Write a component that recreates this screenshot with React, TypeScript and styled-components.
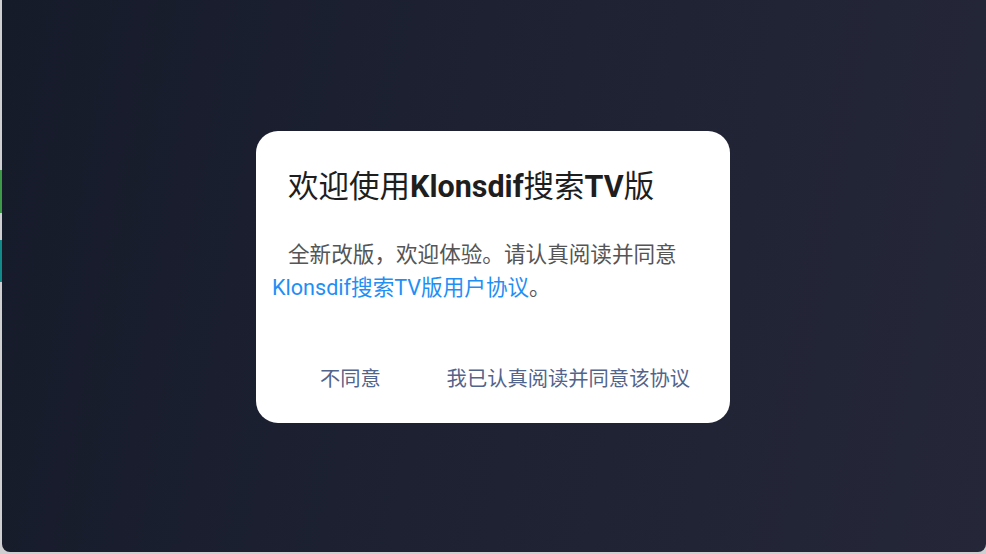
import React from "react";
import styled, { createGlobalStyle } from "styled-components";

const GlobalStyle = createGlobalStyle`
    html, body {
        margin: 0;
        padding: 0;
        width: 986px;
        height: 554px;
        overflow: hidden;
        background: #cfcfd2;
    }
    body {
        font-family: Roboto, "Noto Sans CJK SC", sans-serif;
    }
`;

const Frame = styled.div`
    display: flex;
    width: 986px;
    height: 554px;
`;

const EdgeStrip = styled.div`
    width: 2px;
    display: flex;
    flex-direction: column;
    padding-top: 170px;
`;

const EdgeMark = styled.div<{ $color: string; $height: number; $gap: number }>`
    height: ${(p) => p.$height}px;
    margin-bottom: ${(p) => p.$gap}px;
    background: ${(p) => p.$color};
`;

const Screen = styled.div`
    flex: 1;
    height: 552px;
    border-radius: 0 0 8px 8px;
    background: linear-gradient(100deg, #161b2a 0%, #1d2132 45%, #252738 100%);
    display: flex;
    align-items: flex-start;
    justify-content: center;
    padding-top: 131px;
    box-sizing: border-box;
`;

const Dialog = styled.div`
    width: 474px;
    height: 292px;
    margin-left: -2px;
    background: #ffffff;
    border-radius: 22px;
    display: flex;
    flex-direction: column;
    box-sizing: border-box;
`;

const Title = styled.h1`
    margin: 0;
    padding: 36px 0 0 32px;
    font-size: 30.5px;
    line-height: 40px;
    font-weight: 400;
    color: #1e1e1e;
    white-space: nowrap;
    b {
        font-weight: 700;
    }
`;

const Message = styled.p`
    margin: 0;
    padding: 31px 16px 0 16px;
    font-size: 21.6px;
    line-height: 33px;
    color: #555555;
    text-indent: 16px;
`;

const Link = styled.span`
    color: #1f8ff5;
`;

const Footer = styled.div`
    margin-top: auto;
    padding: 0 40px 27px 64px;
    display: flex;
    justify-content: space-between;
    align-items: center;
`;

const ActionButton = styled.button`
    border: none;
    background: none;
    padding: 0;
    font-family: inherit;
    font-size: 20.3px;
    line-height: 34px;
    color: #52648b;
    cursor: pointer;
`;

const App: React.FC = () => {
    return (
        <>
            <GlobalStyle />
            <Frame>
                <EdgeStrip>
                    <EdgeMark $color="#3e9a48" $height={43} $gap={27} />
                    <EdgeMark $color="#138a8a" $height={42} $gap={0} />
                </EdgeStrip>
                <Screen>
                    <Dialog>
                        <Title>
                            欢迎使用<b>Klonsdif</b>搜索<b>TV</b>版
                        </Title>
                        <Message>
                            全新改版，欢迎体验。请认真阅读并同意
                            <Link>Klonsdif搜索TV版用户协议</Link>。
                        </Message>
                        <Footer>
                            <ActionButton>不同意</ActionButton>
                            <ActionButton>我已认真阅读并同意该协议</ActionButton>
                        </Footer>
                    </Dialog>
                </Screen>
            </Frame>
        </>
    );
};

export default App;
